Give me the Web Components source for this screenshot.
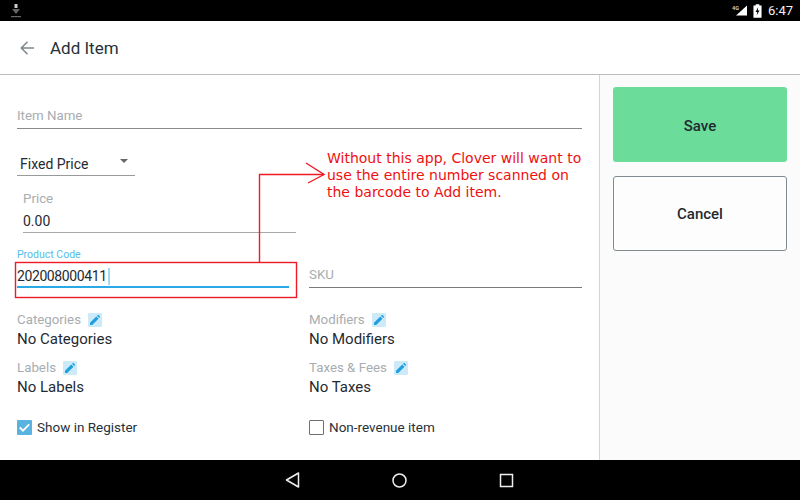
<!DOCTYPE html>
<html>
<head>
<meta charset="utf-8">
<title>Add Item</title>
<style>
    html, body{ margin: 0; height: 100%; }
    body{ font-family: Roboto, "Liberation Sans", sans-serif; color: #1f2a30; overflow: hidden; }
</style>
</head>
<body>
<add-item-screen></add-item-screen>

<script>
class StatusBar extends HTMLElement{
    constructor(){
        super();
        this.attachShadow({mode: 'open'}).innerHTML = `
            <style>
                :host{ display: flex; align-items: center; height: 21px; background: #000; color: #fff; padding: 0 7px 0 10px; }
                .right{ margin-left: auto; display: flex; align-items: center; }
                .time{ font-size: 13px; margin-left: 6px; color: #f2f2f2; }
                svg{ display: block; }
            </style>
            <svg width="12" height="14" viewBox="0 0 12 14">
                <rect x="4.500" y="0" width="3" height="4" fill="#ccc"/>
                <path d="M2 5h8L6 10z" fill="#666"/>
                <rect x="1" y="12" width="10" height="1.200" fill="#666"/>
            </svg>
            <div class="right">
                <svg width="22" height="14" viewBox="0 0 22 14">
                    <path d="M22 1.500v10H11z" fill="#fff"/>
                    <text x="7" y="5.500" font-size="5.500" font-weight="700" fill="#ccc" font-family="Roboto">4G</text>
                </svg>
                <svg width="9" height="14" viewBox="0 0 10 15" style="margin-left:6px">
                    <path d="M3 0h4v1.500h2.500v13.500h-9V1.500H3z" fill="#fff"/>
                    <path d="M5.800 3L2.800 8.500h2L4 12.500l3.300-5.500h-2z" fill="#000"/>
                </svg>
                <span class="time">6:47</span>
            </div>
        `;
    }
}

class ToolBar extends HTMLElement{
    constructor(){
        super();
        this.attachShadow({mode: 'open'}).innerHTML = `
            <style>
                :host{ display: flex; align-items: center; height: 53px; background: #fff; border-bottom: 1px solid #bcbcbc; padding-left: 20px; box-sizing: content-box; }
                svg{ display: block; margin-right: 16px; }
                .title{ font-size: 17px; color: #263238; }
            </style>
            <svg width="14" height="14" viewBox="0 0 14 14" fill="none" stroke="#7d878c" stroke-width="1.500">
                <path d="M14 7H1M7.500 .8L1.300 7l6.200 6.200"/>
            </svg>
            <span class="title"><slot></slot></span>
        `;
    }
}

class LineField extends HTMLElement{
    constructor(){
        super();
        const label = this.getAttribute('label') || '';
        const value = this.getAttribute('value') || '';
        this.attachShadow({mode: 'open'}).innerHTML = `
            <style>
                :host{ display: block; color: #1f2a30; }
                .box{ display: flex; flex-direction: column; height: 100%; justify-content: flex-end; border-bottom: 1px solid var(--line, #8a8a8a); box-sizing: border-box; }
                .label{ font-size: 13.300px; line-height: 16px; color: #a8adb0; }
                .value{ font-size: 14px; line-height: 16px; margin-top: 6px; margin-bottom: 3px; }
                .hint{ margin-bottom: 4px; }
            </style>
            <div class="box">
                <div class="label ${value ? '' : 'hint'}">${label}</div>
                ${value ? `<div class="value">${value}</div>` : ''}
            </div>
        `;
    }
}

class ProductCode extends HTMLElement{
    constructor(){
        super();
        this.attachShadow({mode: 'open'}).innerHTML = `
            <style>
                :host{ display: block; }
                .label{ font-size: 10.500px; line-height: 12px; color: #55bde8; }
                .value{ display: flex; align-items: center; height: 24px; margin-top: 3px; border-bottom: 2px solid #29a9e6; box-sizing: border-box; font-size: 14px; color: #1f2a30; letter-spacing: -.4px; padding-top: 2px; }
                .caret{ width: 2px; height: 17px; background: #a5d8f0; margin-left: 1px; }
            </style>
            <div class="label">Product Code</div>
            <div class="value"><span><slot></slot></span><span class="caret"></span></div>
        `;
    }
}

class PriceSelect extends HTMLElement{
    constructor(){
        super();
        this.attachShadow({mode: 'open'}).innerHTML = `
            <style>
                :host{ display: flex; align-items: center; justify-content: space-between; box-sizing: border-box; width: 118px; height: 26px; padding: 3px 7px 0 3px; border-bottom: 1px solid #9a9a9a; font-size: 14px; color: #1f2a30; }
                i{ width: 0; height: 0; border-left: 4.500px solid transparent; border-right: 4.500px solid transparent; border-top: 4.500px solid #666; margin-top: -6px; }
            </style>
            <span><slot></slot></span><i></i>
        `;
    }
}

class EditableInfo extends HTMLElement{
    constructor(){
        super();
        const label = this.getAttribute('label');
        const value = this.getAttribute('value');
        this.attachShadow({mode: 'open'}).innerHTML = `
            <style>
                :host{ display: block; }
                .top{ display: flex; align-items: center; height: 16px; font-size: 13.300px; color: #a8adb0; }
                .edit{ width: 14px; height: 14px; margin-left: 7px; background: #cdeaf8; border-radius: 1px; display: flex; align-items: center; justify-content: center; position: relative; top: 1px; }
                .value{ margin-top: 3px; font-size: 15px; line-height: 18px; color: #1f2a30; }
                svg{ display: block; }
            </style>
            <div class="top">${label}<span class="edit">
                <svg width="10" height="10" viewBox="0 0 10 10"><path d="M0 10V7.800L6.300 1.500l2.200 2.200L2.200 10zM7 .8l.7-.7a.5.5 0 0 1 .7 0l1.500 1.500a.5.5 0 0 1 0 .7l-.7.7z" fill="#1f9fe0"/></svg>
            </span></div>
            <div class="value">${value}</div>
        `;
    }
}

class CheckRow extends HTMLElement{
    constructor(){
        super();
        const on = this.hasAttribute('checked');
        this.attachShadow({mode: 'open'}).innerHTML = `
            <style>
                :host{ display: flex; align-items: center; gap: 5px; font-size: 13.500px; color: #263238; height: 16px; }
                .box{ width: 15px; height: 15px; box-sizing: border-box; border-radius: 1px; border: ${on ? '0' : '1.500px solid #6f6f6f'}; background: ${on ? '#59b3e0' : '#fff'}; display: block; }
                svg{ display: block; }
            </style>
            <span class="box">${on ? `<svg width="15" height="15" viewBox="0 0 15 15"><path d="M2.800 7.500l3.200 3.200 6.200-6.400" fill="none" stroke="#fff" stroke-width="1.800"/></svg>` : ''}</span>
            <span><slot></slot></span>
        `;
    }
}

class SideButton extends HTMLElement{
    constructor(){
        super();
        this.attachShadow({mode: 'open'}).innerHTML = `
            <style>
                :host{ display: flex; align-items: center; justify-content: center; box-sizing: border-box; width: 174px; border-radius: 3px; font-size: 15px; font-weight: 500; color: #1f2a30; }
                :host([kind=save]){ height: 75px; background: #6cdc9a; padding-top: 2px; }
                :host([kind=cancel]){ height: 75px; background: #fdfdfd; border: 1px solid #808b90; }
            </style>
            <slot></slot>
        `;
    }
}

class NavBar extends HTMLElement{
    constructor(){
        super();
        this.attachShadow({mode: 'open'}).innerHTML = `
            <style>
                :host{ display: flex; align-items: center; justify-content: center; gap: 92px; height: 40px; background: #000; padding-right: 1px; }
                svg{ display: block; }
            </style>
            <svg width="15" height="16" viewBox="0 0 15 16" fill="none" stroke="#eee" stroke-width="1.500" stroke-linejoin="round"><path d="M13.500 1v14L1.500 8z"/></svg>
            <svg width="15" height="15" viewBox="0 0 15 15" fill="none" stroke="#eee" stroke-width="1.500"><circle cx="7.500" cy="7.500" r="6.500"/></svg>
            <svg width="15" height="15" viewBox="0 0 15 15" fill="none" stroke="#eee" stroke-width="1.500"><rect x="1.500" y="1.500" width="12" height="12"/></svg>
        `;
    }
}

class RedNote extends HTMLElement{
    constructor(){
        super();
        this.attachShadow({mode: 'open'}).innerHTML = `
            <style>
                :host{ position: absolute; left: 0; top: 0; width: 800px; height: 500px; pointer-events: none; display: block; }
                svg{ position: absolute; left: 0; top: 0; }
                .note{ position: absolute; left: 327px; top: 150px; font: 14px/17px "DejaVu Sans", Verdana, sans-serif; color: #f01010; white-space: nowrap; }
            </style>
            <svg width="800" height="500" fill="none" stroke="#f01a24" stroke-width="1.400">
                <rect x="15.500" y="262.500" width="281" height="35"/>
                <path d="M259.500 262V174.500H324"/>
                <path d="M306 163L324 174.500L308 183"/>
            </svg>
            <div class="note">Without this app, Clover will want to<br>use the entire number scanned on<br>the barcode to Add item.</div>
        `;
    }
}

class AddItemScreen extends HTMLElement{
    constructor(){
        super();
        this.attachShadow({mode: 'open'}).innerHTML = `
            <style>
                :host{ display: flex; flex-direction: column; width: 800px; height: 500px; position: relative; background: #fff; }
                .body{ flex: 1; display: flex; min-height: 0; }
                form{ flex: 1; box-sizing: border-box; padding: 30px 17px 0 17px; display: flex; flex-direction: column; }
                aside{ width: 201px; box-sizing: border-box; background: #fbfbfb; border-left: 1px solid #d4d4d4; padding: 12px 13px; display: flex; flex-direction: column; gap: 14px; }
                .name{ height: 24px; --line: #8a8a8a; }
                price-select{ margin-top: 21px; }
                .price{ margin: 15px 0 0 6px; width: 273px; height: 42px; --line: #a8a8a8; }
                .grid{ display: grid; grid-template-columns: 279px 273px; column-gap: 13px; }
                .codes{ margin-top: 16px; align-items: end; }
                .codes product-code{ width: 272px; }
                .sku{ height: 26px; --line: #7a7a7a; }
                .info{ margin-top: 23px; row-gap: 11px; }
                .checks{ margin-top: 23px; }
            </style>
            <status-bar></status-bar>
            <tool-bar>Add Item</tool-bar>
            <div class="body">
                <form>
                    <line-field class="name" label="Item Name"></line-field>
                    <price-select>Fixed Price</price-select>
                    <line-field class="price" label="Price" value="0.00"></line-field>
                    <div class="grid codes">
                        <product-code>202008000411</product-code>
                        <line-field class="sku" label="SKU"></line-field>
                    </div>
                    <div class="grid info">
                        <editable-info label="Categories" value="No Categories"></editable-info>
                        <editable-info label="Modifiers" value="No Modifiers"></editable-info>
                        <editable-info label="Labels" value="No Labels"></editable-info>
                        <editable-info label="Taxes &amp; Fees" value="No Taxes"></editable-info>
                    </div>
                    <div class="grid checks">
                        <check-row checked>Show in Register</check-row>
                        <check-row>Non-revenue item</check-row>
                    </div>
                </form>
                <aside>
                    <side-button kind="save">Save</side-button>
                    <side-button kind="cancel">Cancel</side-button>
                </aside>
            </div>
            <nav-bar></nav-bar>
            <red-note></red-note>
        `;
    }
}

customElements.define('status-bar', StatusBar);
customElements.define('tool-bar', ToolBar);
customElements.define('line-field', LineField);
customElements.define('product-code', ProductCode);
customElements.define('price-select', PriceSelect);
customElements.define('editable-info', EditableInfo);
customElements.define('check-row', CheckRow);
customElements.define('side-button', SideButton);
customElements.define('nav-bar', NavBar);
customElements.define('red-note', RedNote);
customElements.define('add-item-screen', AddItemScreen);
</script>
</body>
</html>
